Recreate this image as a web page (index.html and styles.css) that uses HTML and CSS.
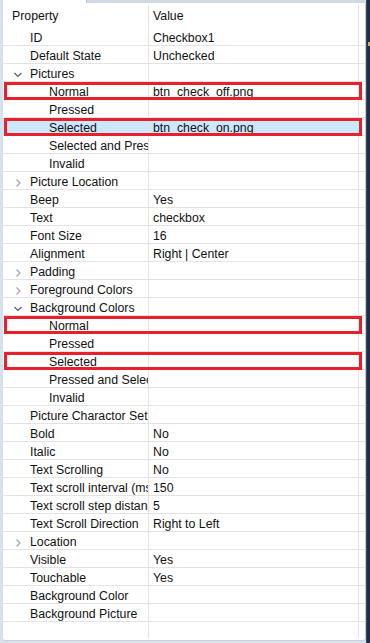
FILE: index.html
```html
<!DOCTYPE html>
<html>
<head>
<meta charset="utf-8">
<link rel="stylesheet" href="styles.css">
</head>
<body>
<div class="main">
  <div class="top"><div class="tab"></div><div class="strip"></div></div>
  <div class="panel">
    <div class="row head">
      <div class="pc"><span class="t">Property</span></div>
      <div class="vc">Value</div>
    </div>
    <div class="row"><div class="pc l0"><span class="slot"></span><span class="t">ID</span></div><div class="vc">Checkbox1</div></div>
    <div class="row"><div class="pc l0"><span class="slot"></span><span class="t">Default State</span></div><div class="vc">Unchecked</div></div>
    <div class="row"><div class="pc l0"><span class="slot"><svg class="chev open" viewBox="0 0 8 8" width="8" height="8"><path d="M0.5 2 L4 5.5 L7.5 2" fill="none" stroke="#5a5a5a" stroke-width="1.2"/></svg></span><span class="t">Pictures</span></div><div class="vc"></div></div>
    <div class="row mark"><div class="pc l1"><span class="slot"></span><span class="ind"></span><span class="t">Normal</span></div><div class="vc">btn_check_off.png</div></div>
    <div class="row"><div class="pc l1"><span class="slot"></span><span class="ind"></span><span class="t">Pressed</span></div><div class="vc"></div></div>
    <div class="row mark sel"><div class="pc l1"><span class="slot"></span><span class="ind"></span><span class="t">Selected</span></div><div class="vc">btn_check_on.png</div></div>
    <div class="row"><div class="pc l1"><span class="slot"></span><span class="ind"></span><span class="t">Selected and Pressed</span></div><div class="vc"></div></div>
    <div class="row"><div class="pc l1"><span class="slot"></span><span class="ind"></span><span class="t">Invalid</span></div><div class="vc"></div></div>
    <div class="row"><div class="pc l0"><span class="slot"><svg class="chev" viewBox="0 0 8 8" width="8" height="8"><path d="M2.5 0.5 L6 4 L2.5 7.5" fill="none" stroke="#a6a6a6" stroke-width="1.2"/></svg></span><span class="t">Picture Location</span></div><div class="vc"></div></div>
    <div class="row"><div class="pc l0"><span class="slot"></span><span class="t">Beep</span></div><div class="vc">Yes</div></div>
    <div class="row"><div class="pc l0"><span class="slot"></span><span class="t">Text</span></div><div class="vc">checkbox</div></div>
    <div class="row"><div class="pc l0"><span class="slot"></span><span class="t">Font Size</span></div><div class="vc">16</div></div>
    <div class="row"><div class="pc l0"><span class="slot"></span><span class="t">Alignment</span></div><div class="vc">Right | Center</div></div>
    <div class="row"><div class="pc l0"><span class="slot"><svg class="chev" viewBox="0 0 8 8" width="8" height="8"><path d="M2.5 0.5 L6 4 L2.5 7.5" fill="none" stroke="#a6a6a6" stroke-width="1.2"/></svg></span><span class="t">Padding</span></div><div class="vc"></div></div>
    <div class="row"><div class="pc l0"><span class="slot"><svg class="chev" viewBox="0 0 8 8" width="8" height="8"><path d="M2.5 0.5 L6 4 L2.5 7.5" fill="none" stroke="#a6a6a6" stroke-width="1.2"/></svg></span><span class="t">Foreground Colors</span></div><div class="vc"></div></div>
    <div class="row"><div class="pc l0"><span class="slot"><svg class="chev open" viewBox="0 0 8 8" width="8" height="8"><path d="M0.5 2 L4 5.5 L7.5 2" fill="none" stroke="#5a5a5a" stroke-width="1.2"/></svg></span><span class="t">Background Colors</span></div><div class="vc"></div></div>
    <div class="row mark"><div class="pc l1"><span class="slot"></span><span class="ind"></span><span class="t">Normal</span></div><div class="vc"></div></div>
    <div class="row"><div class="pc l1"><span class="slot"></span><span class="ind"></span><span class="t">Pressed</span></div><div class="vc"></div></div>
    <div class="row mark"><div class="pc l1"><span class="slot"></span><span class="ind"></span><span class="t">Selected</span></div><div class="vc"></div></div>
    <div class="row"><div class="pc l1"><span class="slot"></span><span class="ind"></span><span class="t">Pressed and Selected</span></div><div class="vc"></div></div>
    <div class="row"><div class="pc l1"><span class="slot"></span><span class="ind"></span><span class="t">Invalid</span></div><div class="vc"></div></div>
    <div class="row"><div class="pc l0"><span class="slot"></span><span class="t">Picture Charactor Set</span></div><div class="vc"></div></div>
    <div class="row"><div class="pc l0"><span class="slot"></span><span class="t">Bold</span></div><div class="vc">No</div></div>
    <div class="row"><div class="pc l0"><span class="slot"></span><span class="t">Italic</span></div><div class="vc">No</div></div>
    <div class="row"><div class="pc l0"><span class="slot"></span><span class="t">Text Scrolling</span></div><div class="vc">No</div></div>
    <div class="row"><div class="pc l0"><span class="slot"></span><span class="t">Text scroll interval (ms)</span></div><div class="vc">150</div></div>
    <div class="row"><div class="pc l0"><span class="slot"></span><span class="t">Text scroll step distance</span></div><div class="vc">5</div></div>
    <div class="row"><div class="pc l0"><span class="slot"></span><span class="t">Text Scroll Direction</span></div><div class="vc">Right to Left</div></div>
    <div class="row"><div class="pc l0"><span class="slot"><svg class="chev" viewBox="0 0 8 8" width="8" height="8"><path d="M2.5 0.5 L6 4 L2.5 7.5" fill="none" stroke="#a6a6a6" stroke-width="1.2"/></svg></span><span class="t">Location</span></div><div class="vc"></div></div>
    <div class="row"><div class="pc l0"><span class="slot"></span><span class="t">Visible</span></div><div class="vc">Yes</div></div>
    <div class="row"><div class="pc l0"><span class="slot"></span><span class="t">Touchable</span></div><div class="vc">Yes</div></div>
    <div class="row"><div class="pc l0"><span class="slot"></span><span class="t">Background Color</span></div><div class="vc"></div></div>
    <div class="row"><div class="pc l0"><span class="slot"></span><span class="t">Background Picture</span></div><div class="vc"></div></div>
    <div class="row last"><div class="pc"></div><div class="vc"></div></div>
  </div>
</div>
<div class="edge"><span class="tick"></span></div>
</body>
</html>
```
FILE: styles.css
```css
html, body {
  margin: 0;
  padding: 0;
}
body {
  width: 370px;
  height: 643px;
  overflow: hidden;
  display: flex;
  background: #d8e0eb;
  font-family: "Liberation Sans", Arial, sans-serif;
  font-size: 12.3px;
  color: #111;
}
.main {
  width: 366px;
  display: flex;
  flex-direction: column;
}
.top {
  height: 3px;
  display: flex;
  padding-left: 3px;
}
.tab {
  width: 83px;
  background: #fff;
  border-right: 1px solid #b9c2cf;
}
.strip {
  flex: 1;
  background: #d0d8e4;
}
.panel {
  flex: 1;
  margin-left: 3px;
  margin-bottom: 2px;
  background: #fff;
  border-right: 1px solid #c3cad4;
  border-bottom: 1px solid #c9d0da;
  border-radius: 0 0 3px 3px;
  display: flex;
  flex-direction: column;
}
.row {
  position: relative;
  display: flex;
  height: 18px;
  box-sizing: border-box;
  border-bottom: 1px solid #e3e3e3;
  line-height: 13px;
  white-space: nowrap;
}
.row.head {
  height: 23px;
  margin-top: 2px;
  line-height: 19px;
  border-bottom: none;
}
.row.last {
  flex: 1;
  height: auto;
  border-bottom: none;
  margin-bottom: 2px;
}
.pc {
  width: 146px;
  flex: none;
  box-sizing: border-box;
  border-right: 1px solid #e3e3e3;
  overflow: hidden;
  display: flex;
  align-items: flex-start;
  padding-left: 9px;
  padding-top: 4px;
}
.head .pc, .head .vc {
  padding-top: 2px;
}
.slot {
  width: 18px;
  flex: none;
  display: flex;
  align-items: center;
  justify-content: flex-start;
  padding-left: 2px;
  box-sizing: border-box;
  height: 13px;
}
.ind {
  width: 19px;
  flex: none;
}
.chev {
  display: block;
}
.vc {
  width: 210px;
  flex: none;
  box-sizing: border-box;
  border-right: 1px solid #e3e3e3;
  padding-left: 4px;
  padding-top: 4px;
  overflow: hidden;
}
.sel .pc, .sel .vc {
  background: #cce8ff;
}
.mark::after {
  content: "";
  position: absolute;
  left: 1px;
  right: 3px;
  top: 0;
  bottom: -1px;
  border: 3px solid #e8202b;
  pointer-events: none;
}
.edge {
  flex: 1;
  background: #1f2c4c;
  border-left: 1px solid #3c4a6c;
  position: relative;
}
.tick {
  position: absolute;
  left: 1px;
  top: 42px;
  width: 3px;
  height: 4px;
  background: #d4b24a;
}
```
